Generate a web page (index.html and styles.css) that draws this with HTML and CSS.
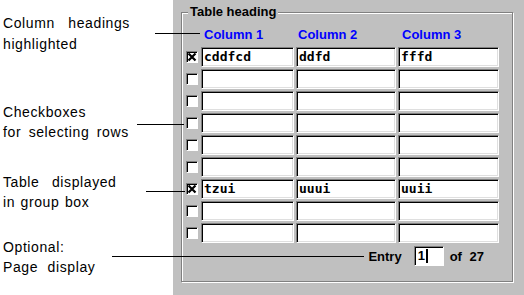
FILE: index.html
```html
<!DOCTYPE html>
<html lang="en">
<head>
  <meta charset="UTF-8">
  <meta name="viewport" content="width=device-width, initial-scale=1.0">
  <title>Table in group box</title>
  <link rel="stylesheet" href="styles.css">
</head>
<body>
  <div class="page">
    <!-- annotations on the left -->
    <div class="notes">
      <div class="note note-head">
        <div class="ws-9">Column headings</div>
        <div>highlighted</div>
      </div>
      <div class="note note-check">
        <div>Checkboxes</div>
        <div class="ws-3">for selecting rows</div>
      </div>
      <div class="note note-table">
        <div class="ws-8">Table displayed</div>
        <div class="ws-1">in group box</div>
      </div>
      <div class="note note-page">
        <div>Optional:</div>
        <div class="ws-5">Page display</div>
      </div>
    </div>

    <div class="panel">
      <fieldset class="group">
        <legend>Table heading</legend>
        <div class="grid" id="grid">
          <div></div>
          <div class="col-head">Column 1</div>
          <div class="col-head">Column 2</div>
          <div class="col-head">Column 3</div>
        </div>
        <div class="entry-row">
          <span>Entry</span>
          <div class="entry-box">1<span class="caret"></span></div>
          <span class="of">of 27</span>
        </div>
      </fieldset>
    </div>

    <!-- leader lines -->
    <div class="leader l1"></div>
    <div class="leader l2"></div>
    <div class="leader l3"></div>
    <div class="leader l4"></div>
  </div>

  <script>
    const rows = [
      { checked: true, cells: ["cddfcd", "ddfd", "fffd"] },
      { checked: false, cells: ["", "", ""] },
      { checked: false, cells: ["", "", ""] },
      { checked: false, cells: ["", "", ""] },
      { checked: false, cells: ["", "", ""] },
      { checked: false, cells: ["", "", ""] },
      { checked: true, cells: ["tzui", "uuui", "uuii"] },
      { checked: false, cells: ["", "", ""] },
      { checked: false, cells: ["", "", ""] }
    ];

    const xMark = '<svg width="10" height="10" viewBox="0 0 10 10"><path d="M1.5 1.5 L8.5 8.5 M8.5 1.5 L1.5 8.5" stroke="#000" stroke-width="2.2"/></svg>';

    const grid = document.getElementById('grid');
    rows.forEach(row => {
      const box = document.createElement('div');
      box.className = 'check-cell';
      box.innerHTML = `<div class="check">${row.checked ? xMark : ''}</div>`;
      grid.appendChild(box);
      row.cells.forEach(text => {
        const cell = document.createElement('div');
        cell.className = 'cell';
        cell.textContent = text;
        grid.appendChild(cell);
      });
    });
  </script>
</body>
</html>
```

FILE: styles.css
```css
body {
  margin: 0;
  background: #fff;
  color: #000;
  font-family: "Liberation Sans", Arial, sans-serif;
}
.page {
  position: relative;
  display: flex;
  width: 524px;
  height: 295px;
  overflow: hidden;
}
.notes {
  width: 170px;
  padding: 13px 0 0 3px;
  font-size: 14px;
  line-height: 20px;
  letter-spacing: 0.6px;
}
.note-head div:first-child {
  line-height: 21px;
}
.note-check {
  margin-top: 48px;
}
.note-table {
  margin-top: 30px;
}
.note-page {
  margin-top: 25px;
}
.ws-1 { word-spacing: 1px; }
.ws-3 { word-spacing: 3px; }
.ws-5 { word-spacing: 5px; }
.ws-8 { word-spacing: 8px; }
.ws-9 { word-spacing: 9px; }

.panel {
  flex: 1;
  background: #c0c0c0;
  padding: 4px 11px 0 8px;
}
.group {
  margin: 0;
  padding: 6px 11px 15px 4px;
  border: 1px solid #808080;
  box-shadow: 1px 1px 0 #fff, inset 1px 1px 0 #fff;
  min-inline-size: 0;
}
.group legend {
  margin-left: 2px;
  padding: 0 2px;
  background: #c0c0c0;
  font-size: 13px;
  font-weight: bold;
  line-height: 16px;
}
.grid {
  display: grid;
  grid-template-columns: 13px 93px 100px 101px;
  grid-template-rows: 19px;
  grid-auto-rows: 20px;
  column-gap: 2px;
  row-gap: 2px;
}
.col-head {
  color: #0000ff;
  font-size: 13px;
  font-weight: bold;
  line-height: 16px;
  padding: 1px 0 0 3px;
}
.col-head:nth-child(3) {
  padding-left: 2px;
}
.col-head:nth-child(4) {
  padding-left: 4px;
}
.check-cell {
  display: flex;
  align-items: center;
}
.check {
  width: 10px;
  height: 10px;
  background: #fff;
  border: 1px solid;
  border-color: #808080 #fff #fff #808080;
  box-shadow: inset 1px 1px 0 #000;
  display: flex;
  align-items: center;
  justify-content: center;
}
.check svg {
  display: block;
}
.cell {
  background: #fff;
  border: 1px solid;
  border-color: #808080 #fff #fff #808080;
  box-shadow: inset 1px 1px 0 #000, inset -1px -1px 0 #dfdfdf;
  font-family: "DejaVu Sans Mono", "Liberation Mono", monospace;
  font-weight: bold;
  font-size: 13px;
  line-height: 16px;
  padding: 1px 0 0 2px;
  overflow: hidden;
  white-space: nowrap;
}
.entry-row {
  width: 298px;
  display: flex;
  justify-content: flex-end;
  align-items: center;
  margin-top: 3px;
  font-size: 13px;
  font-weight: bold;
  word-spacing: 4px;
}
.entry-box {
  width: 25px;
  height: 17px;
  margin: 0 6px 0 12px;
  background: #fff;
  border: 1px solid;
  border-color: #808080 #fff #fff #808080;
  box-shadow: inset 1px 1px 0 #000;
  padding: 1px 0 0 3px;
  line-height: 16px;
  display: flex;
  align-items: flex-start;
}
.caret {
  width: 2px;
  height: 14px;
  margin: 1px 0 0 1px;
  background: #000;
}
.leader {
  position: absolute;
  height: 1px;
  background: #000;
}
.l1 { top: 33px; left: 155px; width: 45px; }
.l2 { top: 124px; left: 137px; width: 47px; }
.l3 { top: 191px; left: 146px; width: 39px; }
.l4 { top: 256px; left: 112px; width: 252px; }
```
